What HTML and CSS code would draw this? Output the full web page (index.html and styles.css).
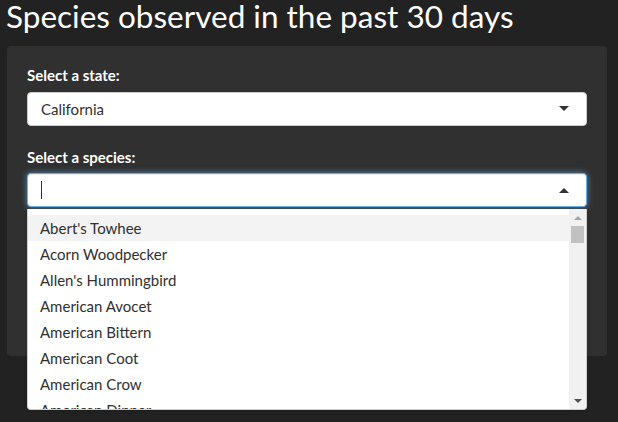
FILE: index.html
```html
<!DOCTYPE html>
<html>
<head>
<meta charset="utf-8">
<link rel="stylesheet" href="styles.css">
</head>
<body>
<div class="page">
  <h2 class="title">Species observed in the past 30 days</h2>
  <div class="panel">
    <div class="group">
      <label class="label">Select a state:</label>
      <div class="select">
        <span class="value">California</span>
        <span class="caret caret-down"></span>
      </div>
    </div>
    <div class="group">
      <label class="label">Select a species:</label>
      <div class="select-wrap">
        <div class="select focus">
          <span class="cursor"></span>
          <span class="caret caret-up"></span>
        </div>
        <div class="dropdown">
          <div class="options">
            <div class="option active">Abert's Towhee</div>
            <div class="option">Acorn Woodpecker</div>
            <div class="option">Allen's Hummingbird</div>
            <div class="option">American Avocet</div>
            <div class="option">American Bittern</div>
            <div class="option">American Coot</div>
            <div class="option">American Crow</div>
            <div class="option">American Dipper</div>
          </div>
          <div class="scrollbar">
            <div class="sb-btn"><span class="sb-arrow sb-up"></span></div>
            <div class="sb-track"><div class="sb-thumb"></div></div>
            <div class="sb-btn"><span class="sb-arrow sb-down"></span></div>
          </div>
        </div>
      </div>
    </div>
  </div>
</div>
</body>
</html>
```
FILE: styles.css
```css
* { box-sizing: border-box; }
html {
  height: 100%;
  background: #222222;
}
body {
  margin: 0;
  padding: 0;
  height: 100%;
  min-height: 422px;
  overflow: hidden;
  background: #222222;
  font-family: Lato, "Open Sans", sans-serif;
  font-size: 15px;
  color: #ffffff;
}
.page {
  min-height: 422px;
  padding: 0 11px 0 7px;
}
.title {
  margin: 0 0 0 -1px;
  font-size: 31.5px;
  font-weight: 400;
  line-height: 32px;
  color: #ffffff;
}
.panel {
  margin-top: 14px;
  width: 600px;
  height: 310px;
  background: #303030;
  border-radius: 4px;
  padding: 18px 20px 0 20px;
  display: flex;
  flex-direction: column;
  gap: 20px;
}
.group {
  display: flex;
  flex-direction: column;
}
.label {
  font-weight: 700;
  font-size: 15px;
  line-height: 22.5px;
  margin-bottom: 5px;
  color: #ffffff;
}
.select-wrap {
  position: relative;
}
.select {
  height: 34px;
  background: #ffffff;
  border: 1px solid #cccccc;
  border-radius: 4px;
  display: flex;
  align-items: center;
  padding: 0 12px 0 13px;
  color: #303030;
  font-size: 15px;
}
.select.focus {
  border-color: #66afe9;
  box-shadow: inset 0 1px 1px rgba(0,0,0,.075), 0 0 6px rgba(102,175,233,.7);
}
.value { flex: 1; }
.cursor {
  width: 1px;
  height: 18px;
  background: #303030;
}
.caret {
  margin-left: auto;
  margin-right: 5px;
  width: 0;
  height: 0;
  border-left: 5px solid transparent;
  border-right: 5px solid transparent;
}
.caret-down { border-top: 5px solid #333333; }
.caret-up { border-bottom: 5px solid #333333; }
.dropdown {
  position: absolute;
  z-index: 10;
  top: 36px;
  left: 0;
  right: 0;
  height: 201px;
  background: #ffffff;
  border: 1px solid #d0d0d0;
  border-top: 0;
  border-radius: 0 0 4px 4px;
  box-shadow: 0 1px 3px rgba(0,0,0,.1);
  display: flex;
  overflow: hidden;
}
.options {
  flex: 1;
  padding-top: 6px;
  overflow: hidden;
}
.option {
  height: 26px;
  line-height: 26px;
  padding: 0 12px;
  color: #303030;
  font-size: 15px;
  white-space: nowrap;
}
.option.active { background: #f3f3f3; }
.scrollbar {
  width: 17px;
  background: #f1f1f1;
  display: flex;
  flex-direction: column;
}
.sb-btn {
  height: 17px;
  display: flex;
  align-items: center;
  justify-content: center;
}
.sb-track {
  flex: 1;
  padding: 0 2px;
}
.sb-thumb {
  height: 17px;
  background: #c1c1c1;
}
.sb-arrow {
  width: 0;
  height: 0;
  border-left: 4px solid transparent;
  border-right: 4px solid transparent;
}
.sb-up { border-bottom: 4px solid #a3a3a3; }
.sb-down { border-top: 4px solid #505050; }
```
